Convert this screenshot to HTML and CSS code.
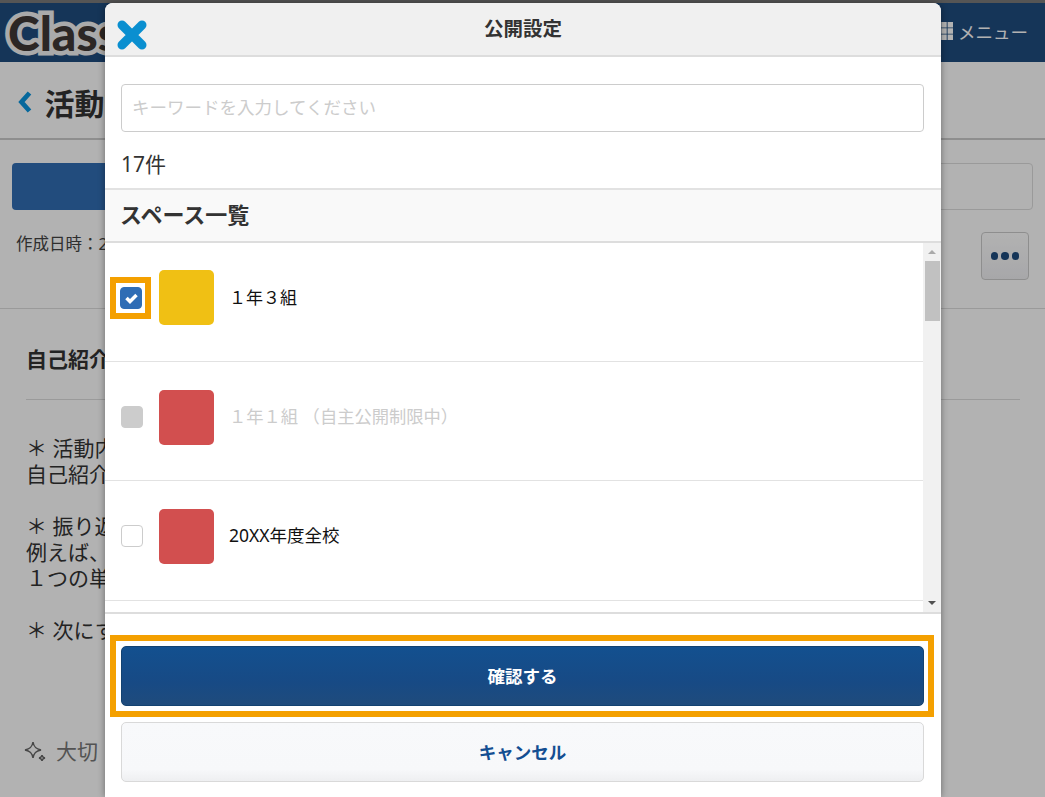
FILE: index.html
```html
<!DOCTYPE html>
<html lang="ja">
<head>
<meta charset="utf-8">
<title>公開設定</title>
<link rel="stylesheet" href="styles.css">
</head>
<body>
<div class="page">
  <header class="topbar">
    <span class="logo">Class</span>
    <span class="menu">
      <svg class="menu-icon" viewBox="0 0 20 20" width="18" height="18"><path d="M0 0h6v6H0zM7 0h6v6H7zM14 0h6v6h-6zM0 7h6v6H0zM7 7h6v6H7zM14 7h6v6h-6zM0 14h6v6H0zM7 14h6v6H7zM14 14h6v6h-6z" fill="#fff"/></svg>
      <span>メニュー</span>
    </span>
  </header>
  <div class="titlebar">
    <svg class="back" viewBox="0 0 16 24" width="16" height="24"><path d="M12.500 3 4.500 12l8 9" fill="none" stroke="#0a96e0" stroke-width="4.800"/></svg>
    <h1>活動記録</h1>
  </div>
  <div class="tabs">
    <div class="tab tab-on"></div>
    <div class="tab tab-off"></div>
  </div>
  <div class="meta">
    <span class="date">作成日時：20XX</span>
    <button class="more"><i></i><i></i><i></i></button>
  </div>
  <section class="article">
    <h2>自己紹介</h2>
    <p>＊ 活動内容<br>自己紹介</p>
    <p>＊ 振り返り<br>例えば、<br>１つの単語</p>
    <p>＊ 次にする</p>
    <div class="important">
      <svg viewBox="0 0 24 24" width="24" height="24"><path d="M10 3c.8 5 2.800 7 8 8-5.200 1-7.200 3-8 8-.8-5-2.800-7-8-8 5.200-1 7.200-3 8-8zM19 16c.3 2 1 2.700 3 3-2 .4-2.700 1-3 3-.3-2-1-2.600-3-3 2-.3 2.700-1 3-3z" fill="none" stroke="#666" stroke-width="1.500"/></svg>
      <span>大切</span>
    </div>
  </section>
</div>
<div class="overlay"></div>
<div class="modal">
  <div class="modal-head">
    <svg class="close" viewBox="0 0 30 30" width="30" height="30"><path d="M5 5 25 25M25 5 5 25" stroke="#0a8fd0" stroke-width="9" stroke-linecap="round"/></svg>
    <span class="modal-title">公開設定</span>
  </div>
  <div class="search">
    <input type="text" placeholder="キーワードを入力してください">
  </div>
  <div class="count">17件</div>
  <div class="list-head"><span>スペース一覧</span></div>
  <div class="list-wrap">
    <ul class="list">
      <li class="row">
        <span class="mark"><span class="mark-frame"><span class="check check-on"><svg viewBox="0 0 22 22" width="22" height="22"><path d="M6.500 11l3.500 3.500L16.500 8" fill="none" stroke="#fff" stroke-width="3.500"/></svg></span></span></span>
        <span class="thumb yellow"></span>
        <span class="name">１年３組</span>
      </li>
      <li class="row">
        <span class="mark"><span class="check check-disabled"></span></span>
        <span class="thumb red"></span>
        <span class="name name-disabled">１年１組 （自主公開制限中）</span>
      </li>
      <li class="row">
        <span class="mark"><span class="check"></span></span>
        <span class="thumb red"></span>
        <span class="name name-latin">20XX年度全校</span>
      </li>
    </ul>
    <div class="scrollbar">
      <span class="arrow arrow-up"></span>
      <span class="track"><span class="thumbbar"></span></span>
      <span class="arrow arrow-down"></span>
    </div>
  </div>
  <div class="actions">
    <div class="highlight"><button class="btn-primary">確認する</button></div>
    <button class="btn-cancel">キャンセル</button>
  </div>
</div>
</body>
</html>
```
FILE: styles.css
```css
* { box-sizing: border-box; }
html, body { margin: 0; height: 100%; overflow: hidden; }
body {
  position: relative;
  width: 1045px;
  height: 797px;
  background: #fff;
  font-family: "Noto Sans", "Noto Sans CJK JP", sans-serif;
  color: #333;
}
.page { height: 797px; overflow: hidden; padding-top: 3px; background: #fff; }
.topbar {
  height: 59px;
  background: #1f4c7e;
  display: flex;
  align-items: center;
  justify-content: space-between;
  padding: 0 17px 0 8px;
}
.logo {
  font-family: "Lato", sans-serif;
  font-weight: 900;
  font-size: 48px;
  color: #3f3936;
  -webkit-text-stroke: 9px #f4f4f4;
  paint-order: stroke fill;
  stroke-linejoin: round;
  line-height: 1;
}
.menu { display: flex; align-items: center; gap: 5px; color: #fff; font-size: 17.500px; margin-top: -3px; }
.titlebar {
  height: 78px;
  display: flex;
  align-items: center;
  gap: 11.500px;
  padding: 4px 17px 0;
  border-bottom: 2px solid #ccc;
  background: #fff;
}
.titlebar h1 { margin: 0; font-size: 30px; font-weight: 700; color: #333; }
.tabs { display: flex; justify-content: space-between; padding: 23px 12px 0; }
.tab { height: 47px; border-radius: 4px; }
.tab-on { width: 300px; background: #326eb4; }
.tab-off { width: 300px; border: 1px solid #ddd; background: #fff; }
.meta {
  height: 99px;
  display: flex;
  justify-content: space-between;
  padding: 21px 16px 0;
  border-bottom: 1px solid #ddd;
  font-size: 16.500px;
}
.date { color: #444; line-height: 26px; }
.more {
  width: 48px;
  height: 48px;
  margin-top: 1px;
  display: flex;
  align-items: center;
  justify-content: center;
  gap: 3px;
  border: 1px solid #ccc;
  border-radius: 4px;
  background: linear-gradient(#fff, #f0f0f3);
  padding: 0;
}
.more i { width: 7.500px; height: 7.500px; border-radius: 50%; background: #1f4c7e; }
.article { padding: 37px 26px 0; font-size: 21px; line-height: 26px; color: #333; }
.article h2 {
  margin: 0 -1px 35px 0;
  padding-bottom: 27px;
  font-size: 21px;
  font-weight: 700;
  border-bottom: 1px solid #ddd;
}
.article p { margin: 0 0 26px; }
.important { display: flex; align-items: center; gap: 9px; margin-top: 95px; margin-left: -3px; color: #777; }

.overlay { position: absolute; inset: 0; background: rgba(0, 0, 0, .3); }
.overlay::before { content: ""; position: absolute; left: 0; right: 0; top: 0; height: 3px; background: #555; }
.modal {
  position: absolute;
  left: 105px;
  top: 3px;
  width: 836px;
  height: 794px;
  background: #fff;
  border-radius: 8px 8px 0 0;
  box-shadow: 0 0 7px rgba(0, 0, 0, .4);
  overflow: hidden;
  display: flex;
  flex-direction: column;
}
.modal-head {
  position: relative;
  height: 54px;
  flex: none;
  background: #f0f0f0;
  border-bottom: 2px solid #ddd;
  display: flex;
  align-items: center;
  justify-content: center;
  font-size: 19.500px;
  font-weight: 700;
  color: #333;
}
.modal-title { margin-top: -4px; }
.close { position: absolute; left: 12px; top: 17px; }
.search { padding: 27px 16px 0; flex: none; }
.search input {
  display: block;
  width: 803px;
  height: 48px;
  padding: 0 10px 3px;
  border: 1px solid #ccc;
  border-radius: 4px;
  font: 17.500px "Noto Sans CJK JP", sans-serif;
  background: #fff;
}
.search input::placeholder { color: #ccc; opacity: 1; }
.count { height: 56px; flex: none; padding: 5px 16px 0; display: flex; align-items: center; font-size: 21px; color: #333; }
.list-head {
  height: 55px;
  flex: none;
  background: #f9f9f9;
  border-top: 2px solid #e2e2e2;
  border-bottom: 2px solid #ddd;
  display: flex;
  align-items: center;
  padding: 0 15px;
  font-size: 22px;
  font-weight: 700;
  color: #333;
}
.list-head span { margin-top: -5px; }
.list-wrap {
  height: 371px;
  flex: none;
  display: flex;
  border-bottom: 2px solid #ddd;
  overflow: hidden;
}
.list { flex: 1; margin: 0; padding: 0; list-style: none; }
.row {
  height: 119.200px;
  display: flex;
  align-items: center;
  border-bottom: 1px solid #e2e2e2;
  padding-bottom: 8.500px;
}
.mark {
  width: 54px;
  display: flex;
  justify-content: center;
  flex: none;
}
.mark-frame {
  width: 41px;
  height: 42px;
  margin-left: -3px;
  padding-left: 1px;
  border: 6px solid #f4a000;
  display: flex;
  align-items: center;
  justify-content: center;
  background: #fff;
}
.check {
  width: 22px;
  height: 22px;
  border: 1px solid #ccc;
  border-radius: 4px;
  background: #fff;
  display: block;
}
.check svg { display: block; margin: -1px; }
.check-on { background: #2f6db5; border-color: #2f6db5; }
.check-disabled { background: #ccc; border-color: #ccc; }
.thumb { width: 55px; height: 55px; border-radius: 5px; flex: none; }
.yellow { background: #f0c014; }
.red { background: #d24f4f; }
.name { margin: -3px 0 0 15px; font-size: 17px; color: #111; }
.name-disabled { color: #ccc; font-size: 17.300px; }
.name-latin { font-size: 17.500px; }
.scrollbar { width: 18px; flex: none; background: #f1f1f1; display: flex; flex-direction: column; align-items: center; }
.arrow { width: 0; height: 0; flex: none; border-left: 4px solid transparent; border-right: 4px solid transparent; margin: 7px 0; }
.arrow-up { border-bottom: 4px solid #aaa; }
.arrow-down { border-top: 4px solid #505050; }
.track { flex: 1; width: 15px; }
.thumbbar { display: block; width: 15px; height: 60px; background: #c1c1c1; }
.actions { padding: 21px 16px 0; flex: none; }
.highlight { margin: 0 -9px 0 -11px; padding: 5px 4px 5px 5px; border: 6px solid #f4a000; }
.btn-primary {
  display: block;
  width: 100%;
  height: 60px;
  padding: 0 0 2px;
  border: 1px solid #134271;
  border-radius: 5px;
  background: linear-gradient(#13508f, #174a85 60%, #1f4b7c);
  color: #fff;
  font: 700 17.500px "Noto Sans CJK JP", sans-serif;
}
.btn-cancel {
  display: block;
  width: 803px;
  height: 60px;
  margin-top: 5px;
  padding: 0 0 2px;
  border: 1px solid #d9d9d9;
  border-radius: 5px;
  background: linear-gradient(#f8f9fb, #f7f8fa 80%, #eeeff1);
  color: #134e92;
  font: 700 17.500px "Noto Sans CJK JP", sans-serif;
}
```
